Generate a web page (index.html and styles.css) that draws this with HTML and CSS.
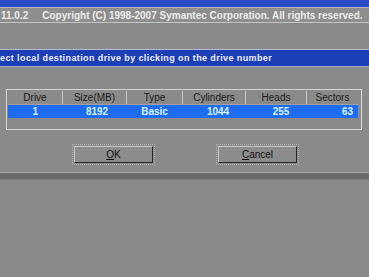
FILE: index.html
```html
<!doctype html>
<html>

<head>
    <meta charset="utf-8">
    <title>Select destination drive</title>
    <link rel="stylesheet" href="styles.css">
</head>

<body>
    <div class="screen">
        <div class="titlebar"></div>
        <div class="infobar">
            <span class="version">11.0.2</span>
            <span>Copyright (C) 1998-2007 Symantec Corporation. All rights reserved.</span>
        </div>

        <div class="prompt">ect local destination drive by clicking on the drive number</div>

        <div class="panel">
            <table class="drives">
                <thead>
                    <tr>
                        <th>Drive</th>
                        <th>Size(MB)</th>
                        <th>Type</th>
                        <th>Cylinders</th>
                        <th>Heads</th>
                        <th>Sectors</th>
                    </tr>
                </thead>
                <tbody>
                    <tr class="selected">
                        <td>1</td>
                        <td>8192</td>
                        <td>Basic</td>
                        <td>1044</td>
                        <td>255</td>
                        <td>63</td>
                    </tr>
                </tbody>
            </table>
        </div>

        <div class="buttons">
            <button class="button"><u>O</u>K</button>
            <button class="button"><u>C</u>ancel</button>
        </div>

        <div class="divider"></div>
    </div>
</body>

</html>
```

FILE: styles.css
```css
body {
    margin: 0;
    background: #8a8a8a;
    font-family: "Liberation Sans", Arial, sans-serif;
}

.screen {
    width: 369px;
    height: 277px;
    overflow: hidden;
    background: #8a8a8a;
}

.titlebar {
    height: 7px;
    background: #2b4cc4;
}

.infobar {
    height: 14px;
    display: flex;
    align-items: center;
    gap: 14px;
    border-top: 1px solid #b8b8c8;
    border-bottom: 1px solid #c4c4c4;
    background: #8e8e8e;
    color: #ececec;
    font-size: 10px;
    font-weight: bold;
    white-space: nowrap;
    padding-left: 1px;
}

.prompt {
    margin-top: 26px;
    height: 16px;
    line-height: 16px;
    background: #1d3fb6;
    border-top: 1px solid #b4bcd8;
    border-bottom: 1px solid #a8b0d0;
    color: #f0f0ff;
    font-size: 9px;
    font-weight: bold;
    letter-spacing: 0.4px;
    white-space: nowrap;
}

.panel {
    margin: 22px 7px 0 6px;
    height: 38px;
    border: 1px solid #d4d4d4;
    border-right-color: #e0e0e0;
    padding: 1px 3px 0 1px;
}

.drives {
    width: 100%;
    border-collapse: collapse;
    font-size: 10px;
    table-layout: fixed;
}

.drives th {
    height: 13px;
    font-weight: normal;
    color: #1a1a1a;
    border-right: 1px solid #c8c8c8;
    border-bottom: 1px solid #a0a0a0;
    padding: 0;
}

.drives th:last-child {
    border-right: none;
}

.drives td {
    height: 13px;
    text-align: center;
    padding: 0;
    color: #d8f4ff;
    font-weight: bold;
}

.drives td:nth-child(2) { padding-left: 5px; }
.drives td:nth-child(4) { padding-left: 8px; }
.drives td:nth-child(5) { padding-left: 10px; }

.drives td:nth-child(6) {
    text-align: right;
    padding-right: 5px;
}

.drives th:nth-child(1) { width: 54px; }
.drives th:nth-child(2) { width: 63px; }
.drives th:nth-child(3) { width: 55px; }
.drives th:nth-child(4) { width: 62px; }
.drives th:nth-child(5) { width: 60px; }

.selected {
    background: #1e6cf0;
}

.buttons {
    display: flex;
    gap: 65px;
    margin: 16px 0 0 74px;
}

.button {
    width: 79px;
    height: 17px;
    padding: 0;
    background: #8c8c8c;
    border: 1px solid #2a2a2a;
    border-top-color: #c8c8c8;
    border-left-color: #c8c8c8;
    outline: 1px dotted #b0b0b0;
    outline-offset: 1px;
    font-family: "Liberation Sans", Arial, sans-serif;
    font-size: 10px;
    color: #101010;
}

.divider {
    margin-top: 9px;
    height: 6px;
    border-top: 1px solid #a4a4a4;
    background: #6c6c6c;
    border-bottom: 1px solid #7a7a7a;
}
```
